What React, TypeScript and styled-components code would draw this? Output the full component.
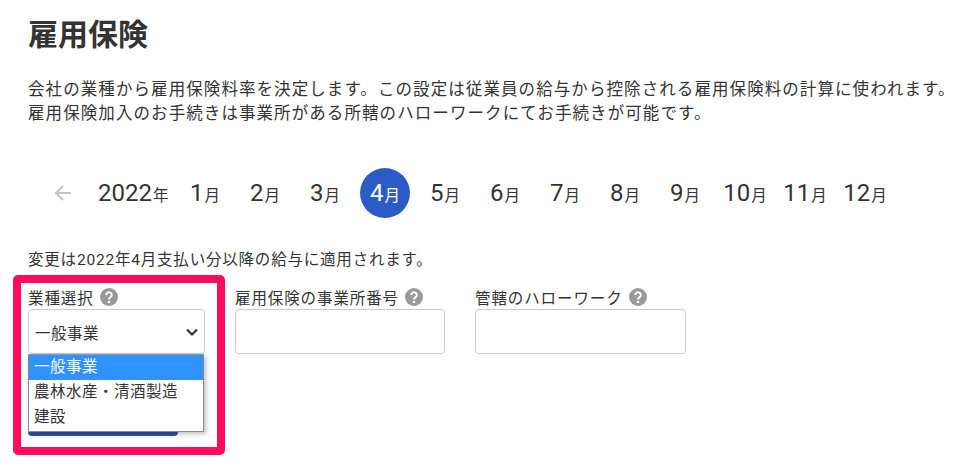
import React from "react";
import styled, { createGlobalStyle } from "styled-components";

const Global = createGlobalStyle`
  html, body { margin: 0; padding: 0; background: #fff; }
  body { font-family: Roboto, "Noto Sans CJK JP", sans-serif; color: #333; width: 958px; height: 471px; overflow: hidden; }
`;

const Page = styled.main`
  position: relative;
  width: 958px;
  height: 471px;
  box-sizing: border-box;
  padding: 16px 0 0 28px;
  overflow: hidden;
`;
const Title = styled.h1`
  margin: 0;
  font-size: 30px;
  line-height: 38px;
  font-weight: 700;
  color: #333;
`;
const Description = styled.p`
  margin: 24px 0 0;
  width: 930px;
  font-size: 16.5px;
  line-height: 24px;
  letter-spacing: 1.08px;
  white-space: nowrap;
  color: #333;
`;
const Timeline = styled.nav`
  display: flex;
  align-items: center;
  height: 50px;
  margin-top: 42px;
  padding-left: 24px;
`;
const Back = styled.span`
  display: flex;
  width: 22px;
  height: 22px;
  margin-right: 24px;
  color: #c4c4c4;
`;
const Year = styled.span`
  display: inline-flex;
  align-items: baseline;
  width: 82px;
  font-size: 24px;
  color: #333;
`;
const Unit = styled.small`
  font-size: 15.5px;
  margin-left: 1px;
`;
const Month = styled.span<{ $active?: boolean }>`
  display: flex;
  align-items: baseline;
  justify-content: center;
  flex: 0 0 50px;
  width: 50px;
  height: 50px;
  margin-right: 10px;
  line-height: 50px;
  border-radius: 50%;
  font-size: 24px;
  color: ${(p) => (p.$active ? "#fff" : "#333")};
  background: ${(p) => (p.$active ? "#2b5cc5" : "transparent")};
`;
const Note = styled.p`
  margin: 31px 0 0;
  font-size: 15.5px;
  line-height: 22px;
  letter-spacing: 0.8px;
  white-space: nowrap;
  color: #333;
`;
const Fields = styled.div`
  display: flex;
  gap: 30px;
  margin-top: 16px;
`;
const Field = styled.div<{ $width: number }>`
  position: relative;
  width: ${(p) => p.$width}px;
`;
const Label = styled.label`
  display: flex;
  align-items: center;
  gap: 6px;
  height: 20px;
  margin-bottom: 2px;
  font-size: 15.5px;
  letter-spacing: 0.9px;
  color: #333;
  white-space: nowrap;
`;
const Help = styled.span`
  display: flex;
  width: 18px;
  height: 18px;
`;
const Input = styled.div`
  box-sizing: border-box;
  height: 45px;
  border: 1px solid #ccc;
  border-radius: 4px;
  background: #fff;
`;
const SelectBox = styled(Input)`
  display: flex;
  align-items: center;
  justify-content: space-between;
  padding: 0 5px 0 6px;
  font-size: 15.5px;
  letter-spacing: 0.5px;
  color: #333;
`;
const Chevron = styled.span`
  display: flex;
  width: 14px;
  height: 14px;
  color: #333;
`;
const Hidden = styled.div`
  position: absolute;
  left: 0;
  top: 125px;
  width: 150px;
  height: 24px;
  border-radius: 4px;
  background: #2a52b5;
`;
const Dropdown = styled.ul`
  position: absolute;
  left: 0;
  top: 67px;
  box-sizing: border-box;
  width: 176px;
  height: 78px;
  margin: 0;
  padding: 0;
  list-style: none;
  background: #fff;
  border: 1px solid #888;
  border-top-color: #999;
  box-shadow: 2px 2px 5px rgba(0, 0, 0, 0.25);
`;
const Option = styled.li<{ $selected?: boolean }>`
  height: 25px;
  line-height: 25px;
  padding-left: 5px;
  font-size: 15.5px;
  letter-spacing: 0.5px;
  white-space: nowrap;
  color: ${(p) => (p.$selected ? "#fff" : "#333")};
  background: ${(p) => (p.$selected ? "#2f92ff" : "#fff")};
`;
const Highlight = styled.div`
  position: absolute;
  left: 13px;
  top: 275px;
  box-sizing: border-box;
  width: 212px;
  height: 180px;
  border: 8px solid #ff0d5c;
  border-radius: 5px;
  pointer-events: none;
`;

const HelpIcon = () => (
  <Help>
    <svg viewBox="0 0 18 18" width="18" height="18">
      <circle cx="9" cy="9" r="9" fill="#999" />
      <path d="M6.2 7a2.8 2.6 0 1 1 4.4 2.1c-1 .7-1.6 1.1-1.6 2.3" fill="none" stroke="#fff" strokeWidth="2" />
      <circle cx="9" cy="14" r="1.3" fill="#fff" />
    </svg>
  </Help>
);

const months = [1, 2, 3, 4, 5, 6, 7, 8, 9, 10, 11, 12];

export default function App() {
  return (
    <Page>
      <Global />
      <Title>雇用保険</Title>
      <Description>
        会社の業種から雇用保険料率を決定します。この設定は従業員の給与から控除される雇用保険料の計算に使われます。
        <br />
        雇用保険加入のお手続きは事業所がある所轄のハローワークにてお手続きが可能です。
      </Description>
      <Timeline>
        <Back>
          <svg viewBox="0 0 22 22" width="22" height="22" fill="none" stroke="currentColor" strokeWidth="2">
            <path d="M19 11H4M11 4l-7 7 7 7" />
          </svg>
        </Back>
        <Year>
          2022<Unit>年</Unit>
        </Year>
        {months.map((m) => (
          <Month key={m} $active={m === 4}>
            {m}
            <Unit>月</Unit>
          </Month>
        ))}
      </Timeline>
      <Note>変更は2022年4月支払い分以降の給与に適用されます。</Note>
      <Fields>
        <Field $width={177}>
          <Label>
            業種選択
            <HelpIcon />
          </Label>
          <SelectBox>
            一般事業
            <Chevron>
              <svg viewBox="0 0 14 14" width="14" height="14" fill="none" stroke="currentColor" strokeWidth="2.2">
                <path d="M2 4.5l5 5 5-5" />
              </svg>
            </Chevron>
          </SelectBox>
          <Hidden />
          <Dropdown>
            <Option $selected>一般事業</Option>
            <Option>農林水産・清酒製造</Option>
            <Option>建設</Option>
          </Dropdown>
        </Field>
        <Field $width={210}>
          <Label>
            雇用保険の事業所番号
            <HelpIcon />
          </Label>
          <Input />
        </Field>
        <Field $width={211}>
          <Label>
            管轄のハローワーク
            <HelpIcon />
          </Label>
          <Input />
        </Field>
      </Fields>
      <Highlight />
    </Page>
  );
}
